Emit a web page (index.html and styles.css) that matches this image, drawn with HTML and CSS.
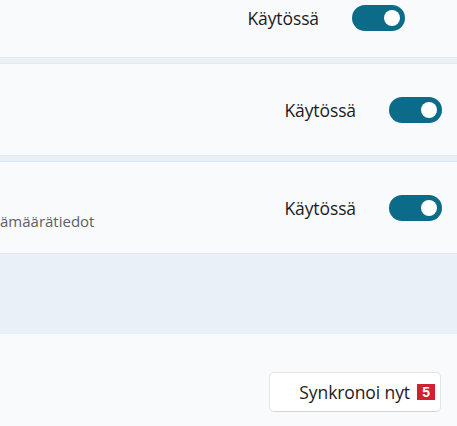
FILE: index.html
```html
<!DOCTYPE html>
<html lang="fi">
<head>
<meta charset="utf-8">
<link rel="stylesheet" href="styles.css">
</head>
<body>
<div class="page">
  <div class="row row-top">
    <span class="state">Käytössä</span>
    <span class="toggle"><span class="knob"></span></span>
  </div>
  <div class="gap"></div>
  <div class="row row-mid">
    <span class="state">Käytössä</span>
    <span class="toggle"><span class="knob"></span></span>
  </div>
  <div class="gap"></div>
  <div class="row row-sub">
    <div class="desc">ämäärätiedot</div>
    <div class="controls">
      <span class="state">Käytössä</span>
      <span class="toggle"><span class="knob"></span></span>
    </div>
  </div>
  <div class="band"></div>
  <div class="footer">
    <button class="sync">Synkronoi nyt<span class="badge">5</span></button>
  </div>
</div>
</body>
</html>
```
FILE: styles.css
```css
html, body {
  margin: 0;
  padding: 0;
}
body {
  background: #f9fafc;
  font-family: "Open Sans", "Noto Sans", sans-serif;
  color: #1c1c1c;
  width: 457px;
  height: 426px;
  overflow: hidden;
}
.page {
  display: flex;
  flex-direction: column;
}
.row {
  display: flex;
  align-items: center;
  justify-content: flex-end;
  background: #f9fafc;
  box-sizing: border-box;
}
.row-top {
  height: 57px;
  align-items: flex-start;
  padding: 5px 52px 0 0;
}
.row-mid {
  height: 92px;
  padding: 0 15px 0 0;
  border-top: 1px solid #e0e8ef;
}
.row-sub {
  height: 92px;
  padding: 0 15px 0 0;
  border-top: 1px solid #e0e8ef;
  justify-content: space-between;
}
.gap {
  height: 5px;
  background: #ebf0f5;
  border-top: 1px solid #e2e9ef;
}
.state {
  font-size: 17.5px;
  line-height: 26px;
  margin-right: 33px;
  letter-spacing: -0.1px;
}
.toggle {
  width: 53px;
  height: 26px;
  border-radius: 13px;
  background: #0c6b88;
  display: flex;
  align-items: center;
  justify-content: flex-end;
  padding-right: 5px;
  box-sizing: border-box;
}
.knob {
  width: 16px;
  height: 16px;
  border-radius: 50%;
  background: #ffffff;
}
.desc {
  font-size: 15px;
  color: #5d6066;
  margin-top: 26px;
  align-self: center;
}
.controls {
  display: flex;
  align-items: center;
  margin-top: 0;
}
.band {
  height: 80px;
  background: #eaf0f7;
  border-top: 1px solid #dfe6ee;
}
.footer {
  height: 92px;
  background: #f9fafb;
  display: flex;
  justify-content: flex-end;
  align-items: flex-start;
  padding: 38px 16px 0 0;
  box-sizing: border-box;
}
.sync {
  width: 172px;
  height: 40px;
  box-sizing: border-box;
  background: #ffffff;
  border: 1px solid #e2e5e9;
  border-bottom-color: #d2d6db;
  border-radius: 5px;
  font-family: "Open Sans", "Noto Sans", sans-serif;
  font-size: 17.5px;
  letter-spacing: -0.1px;
  color: #1c1c1c;
  display: flex;
  align-items: center;
  justify-content: flex-end;
  padding: 0 5px 0 0;
}
.badge {
  display: inline-flex;
  align-items: center;
  justify-content: center;
  width: 18px;
  height: 16px;
  background: #d1202f;
  color: #ffffff;
  font-family: "Liberation Sans", sans-serif;
  font-weight: bold;
  font-size: 14px;
  margin-left: 7px;
}
```
